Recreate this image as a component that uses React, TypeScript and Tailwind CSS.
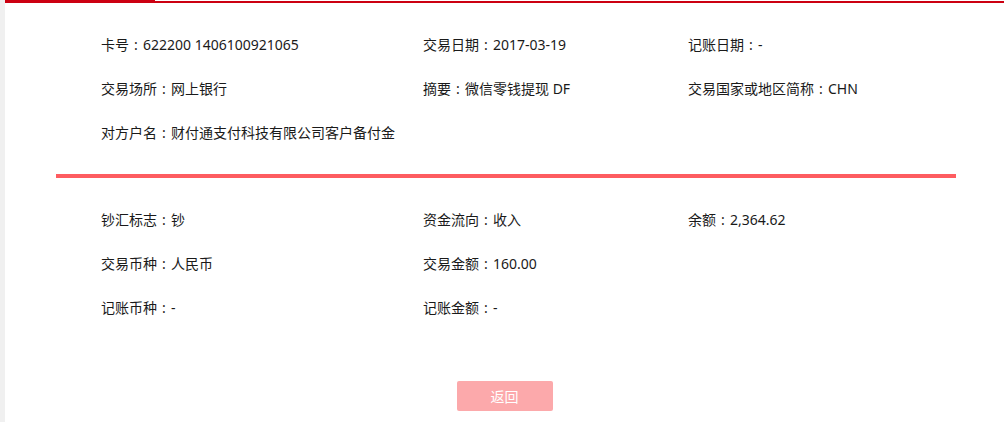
const topFields: [string, string][][] = [
  [
    ['卡号', '622200 1406100921065'],
    ['交易日期', '2017-03-19'],
    ['记账日期', '-'],
  ],
  [
    ['交易场所', '网上银行'],
    ['摘要', '微信零钱提现 DF'],
    ['交易国家或地区简称', 'CHN'],
  ],
  [['对方户名', '财付通支付科技有限公司客户备付金']],
]

const bottomFields: [string, string][][] = [
  [
    ['钞汇标志', '钞'],
    ['资金流向', '收入'],
    ['余额', '2,364.62'],
  ],
  [
    ['交易币种', '人民币'],
    ['交易金额', '160.00'],
  ],
  [
    ['记账币种', '-'],
    ['记账金额', '-'],
  ],
]

export default function App() {
  return (
    <div
      className="flex min-h-[422px] bg-white text-[14px] text-[#1a1a1a]"
      style={{ fontFamily: '"Noto Sans", "Noto Sans CJK SC", sans-serif' }}
    >
      <div className="w-[5px] shrink-0 bg-[#f0f0f0]" />
      <div className="flex flex-1 flex-col">
        <div className="flex h-[3px] items-end">
          <div className="h-[3px] w-[150px] bg-[#cc0011]" />
          <div className="h-[2px] flex-1 bg-[#cc0011]" />
        </div>

        <div className="pt-[20px]">
          <FieldGrid rows={topFields} />
        </div>

        <div className="ml-[51px] mt-[19px] h-[4px] w-[900px] bg-[#fe5c60]" />

        <div className="pt-[20px]">
          <FieldGrid rows={bottomFields} />
        </div>

        <div className="mt-[51px] flex justify-center">
          <button className="h-[30px] w-[96px] rounded-[2px] bg-[#fca9ab] text-[14px] text-white">
            返回
          </button>
        </div>
      </div>
    </div>
  )
}

function FieldGrid({ rows }: { rows: [string, string][][] }) {
  return (
    <div className="pl-[96px]">
      {rows.map((row, i) => (
        <div key={i} className="grid h-[44px] grid-cols-[322px_265px_1fr] items-center">
          {row.map(([label, value]) => (
            <div key={label} className="whitespace-nowrap leading-none">
              {label}
              <span className="inline-block w-[14px] text-center">:</span>
              {value}
            </div>
          ))}
        </div>
      ))}
    </div>
  )
}
